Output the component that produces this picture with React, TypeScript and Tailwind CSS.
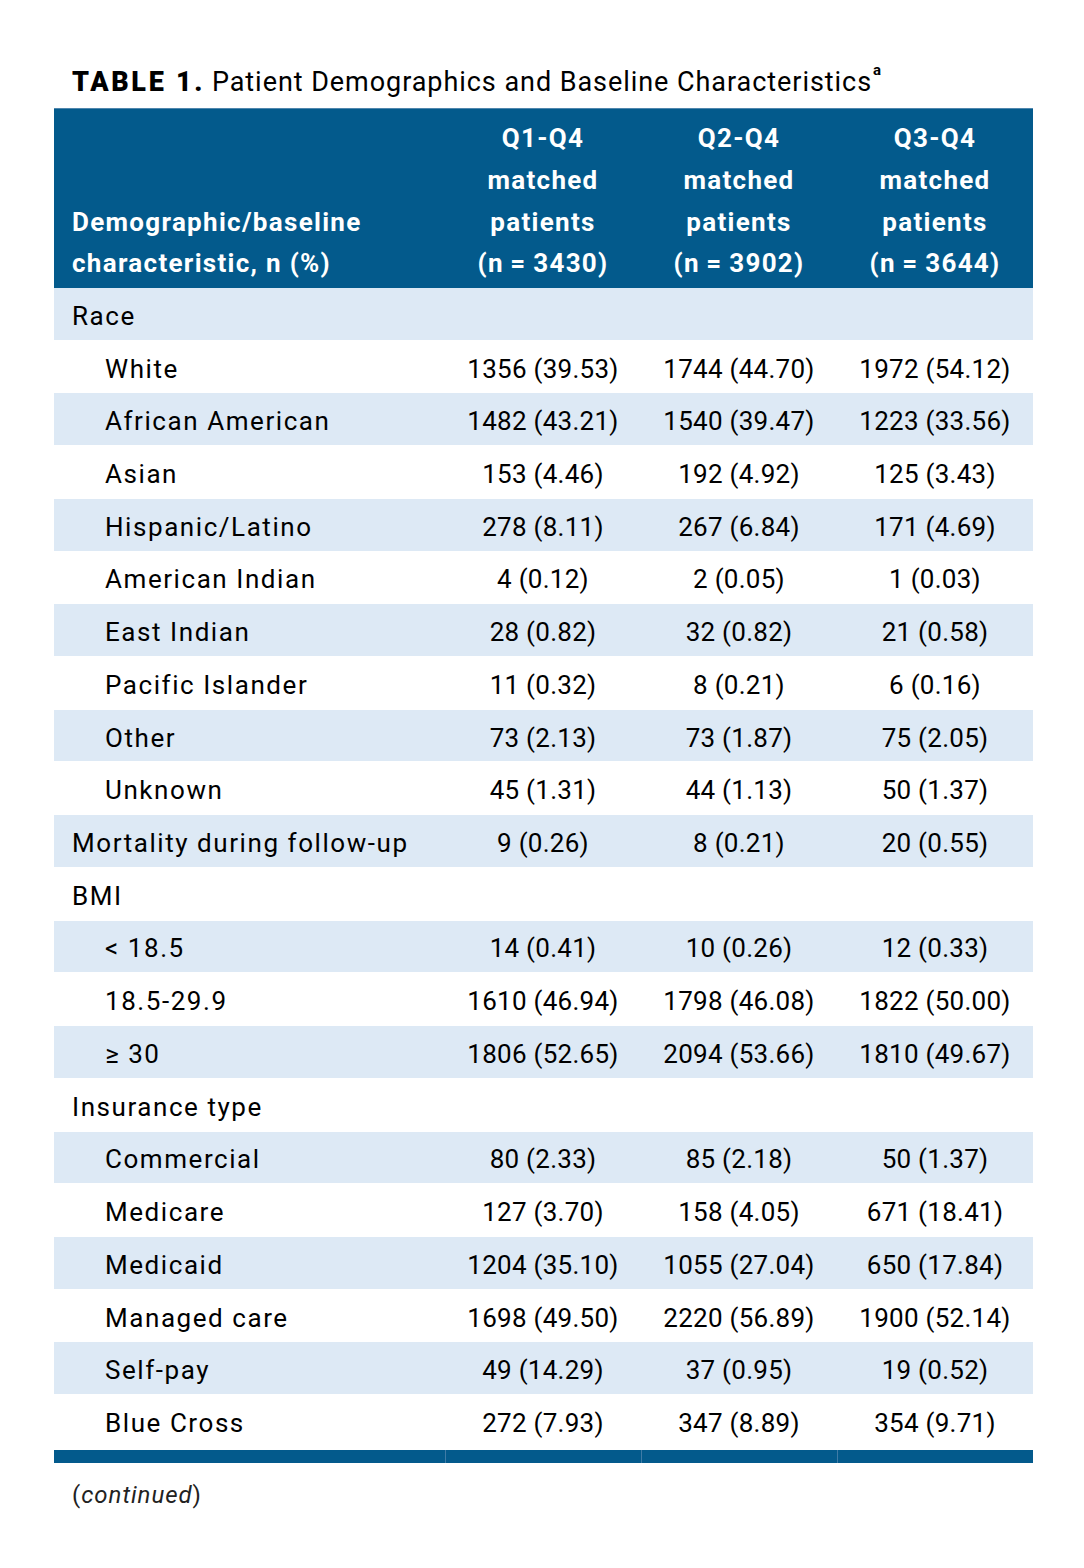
import React from "react";

type Row = { label: string; sub?: boolean; values?: [string, string, string] };

const rows: Row[] = [
  { label: "Race" },
  { label: "White", sub: true, values: ["1356 (39.53)", "1744 (44.70)", "1972 (54.12)"] },
  { label: "African American", sub: true, values: ["1482 (43.21)", "1540 (39.47)", "1223 (33.56)"] },
  { label: "Asian", sub: true, values: ["153 (4.46)", "192 (4.92)", "125 (3.43)"] },
  { label: "Hispanic/Latino", sub: true, values: ["278 (8.11)", "267 (6.84)", "171 (4.69)"] },
  { label: "American Indian", sub: true, values: ["4 (0.12)", "2 (0.05)", "1 (0.03)"] },
  { label: "East Indian", sub: true, values: ["28 (0.82)", "32 (0.82)", "21 (0.58)"] },
  { label: "Pacific Islander", sub: true, values: ["11 (0.32)", "8 (0.21)", "6 (0.16)"] },
  { label: "Other", sub: true, values: ["73 (2.13)", "73 (1.87)", "75 (2.05)"] },
  { label: "Unknown", sub: true, values: ["45 (1.31)", "44 (1.13)", "50 (1.37)"] },
  { label: "Mortality during follow-up", values: ["9 (0.26)", "8 (0.21)", "20 (0.55)"] },
  { label: "BMI" },
  { label: "< 18.5", sub: true, values: ["14 (0.41)", "10 (0.26)", "12 (0.33)"] },
  { label: "18.5-29.9", sub: true, values: ["1610 (46.94)", "1798 (46.08)", "1822 (50.00)"] },
  { label: "≥ 30", sub: true, values: ["1806 (52.65)", "2094 (53.66)", "1810 (49.67)"] },
  { label: "Insurance type" },
  { label: "Commercial", sub: true, values: ["80 (2.33)", "85 (2.18)", "50 (1.37)"] },
  { label: "Medicare", sub: true, values: ["127 (3.70)", "158 (4.05)", "671 (18.41)"] },
  { label: "Medicaid", sub: true, values: ["1204 (35.10)", "1055 (27.04)", "650 (17.84)"] },
  { label: "Managed care", sub: true, values: ["1698 (49.50)", "2220 (56.89)", "1900 (52.14)"] },
  { label: "Self-pay", sub: true, values: ["49 (14.29)", "37 (0.95)", "19 (0.52)"] },
  { label: "Blue Cross", sub: true, values: ["272 (7.93)", "347 (8.89)", "354 (9.71)"] },
];

const cols = [
  ["Q1-Q4", "matched", "patients", "(n\u2009=\u20093430)"],
  ["Q2-Q4", "matched", "patients", "(n\u2009=\u20093902)"],
  ["Q3-Q4", "matched", "patients", "(n\u2009=\u20093644)"],
];

export default function App() {
  return (
    <div className="bg-white min-h-[1568px] pt-[64px] px-[54px] text-black font-['Roboto',sans-serif]">
      <div className="pl-[18px] text-[27px] leading-[36px] mb-[8px]">
        <span className="font-black tracking-[0.1em]">TABLE 1.</span>{" "}
        <span className="tracking-[0.035em]">Patient Demographics and Baseline Characteristics</span>
        <sup className="text-[15px] font-bold align-[9px] ml-[1px]">a</sup>
      </div>

      <div className="w-[979px]">
        <div className="grid grid-cols-[391px_196px_196px_196px] h-[180px] bg-[#035a8c] border-t border-[#4f86ad] text-white font-bold text-[26px] leading-[41.7px] tracking-[0.05em] pb-[3px]">
          <div className="flex flex-col justify-end pl-[18px]">
            <div>Demographic/baseline</div>
            <div>characteristic, n (%)</div>
          </div>
          {cols.map((c, i) => (
            <div key={i} className="flex flex-col justify-end items-center">
              {c.map((line, j) => (
                <div key={j}>{line}</div>
              ))}
            </div>
          ))}
        </div>

        {rows.map((r, i) => (
          <div
            key={i}
            className={`grid grid-cols-[391px_196px_196px_196px] h-[52.72px] items-center text-[26px] border-b border-white pt-[5px] ${
              i % 2 === 0 ? "bg-[#dde9f5]" : "bg-white"
            }`}
          >
            <div className={`tracking-[0.06em] ${r.sub ? "pl-[51px]" : "pl-[18px]"}`}>{r.label}</div>
            {r.values?.map((v, j) => (
              <div key={j} className="text-center tracking-[0.01em]">
                {v}
              </div>
            ))}
          </div>
        ))}

        <div className="grid grid-cols-[391px_196px_196px_196px] h-[13px] mt-[2px] bg-[#035a8c]">
          <div />
          <div className="border-l border-[#3f7ba6]" />
          <div className="border-l border-[#3f7ba6]" />
          <div className="border-l border-[#3f7ba6]" />
        </div>

        <div className="pl-[18px] pt-[14px] text-[24px] tracking-[0.04em] text-[#222]">
          (<span className="italic">continued</span>)
        </div>
      </div>
    </div>
  );
}
